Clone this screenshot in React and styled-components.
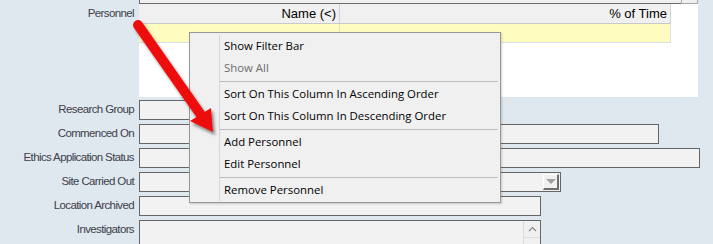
import styled, { createGlobalStyle } from "styled-components"

const GlobalStyle = createGlobalStyle`
    body {
        margin: 0;
        background: #dfe7ef;
        font-family: "Liberation Sans", Arial, sans-serif;
    }
`

const Page = styled.div`
    position: relative;
    width: 713px;
    height: 244px;
    overflow: hidden;
    background: #dfe7ef;
`

const Form = styled.div`
    display: flex;
    flex-direction: column;
`

const Row = styled.div`
    display: flex;
    align-items: flex-start;
`

const Fields = styled.div`
    display: flex;
    flex-direction: column;
    gap: 4px;
    margin-top: 3px;
`

const Label = styled.div`
    width: 134px;
    margin-right: 5px;
    flex-shrink: 0;
    text-align: right;
    font-size: 11.5px;
    letter-spacing: -0.62px;
    line-height: 18px;
    color: #404049;
    padding-top: ${p => p.$top || 0}px;
    white-space: nowrap;
`

const Grid = styled.div`
    width: 559px;
    height: 97px;
    background: #fff;
    display: flex;
    flex-direction: column;
`

const TopStrip = styled.div`
    display: flex;
    height: 4px;
`

const StripLine = styled.div`
    flex: 1;
    box-sizing: border-box;
    border-left: 1px solid #6a6a6a;
    border-bottom: 1px solid #6a6a6a;
    background: #f0f0f0;
`

const StripStub = styled.div`
    width: 17px;
    box-sizing: border-box;
    border: 1px solid #a8a8a8;
    border-top: none;
    background: #f0f0f0;
`

const GridRow = styled.div`
    display: flex;
    width: 532px;
    height: ${p => p.$h}px;
    background: ${p => p.$bg};
    border-bottom: 1px solid ${p => p.$line};
`

const Cell = styled.div`
    width: ${p => p.$w}px;
    box-sizing: border-box;
    border-right: 1px solid ${p => p.$line};
    text-align: right;
    padding-right: 3px;
    font-size: 13px;
    line-height: ${p => p.$h}px;
    color: #000;
    white-space: nowrap;
`

const Field = styled.div`
    width: ${p => p.$w}px;
    height: ${p => p.$h || 20}px;
    box-sizing: border-box;
    border: 1px solid #666;
    background: #f2f2f2;
    display: flex;
    justify-content: flex-end;
    align-items: flex-start;
`

const DropButton = styled.div`
    width: 16px;
    height: 16px;
    box-sizing: border-box;
    margin: 1px 1px 0 0;
    background: #f0f0f0;
    border-top: 1px solid #fff;
    border-left: 1px solid #fff;
    border-right: 2px solid #6d6d6d;
    border-bottom: 2px solid #6d6d6d;
    display: flex;
    align-items: center;
    justify-content: center;

    &::after {
        content: "";
        border-left: 5px solid transparent;
        border-right: 5px solid transparent;
        border-top: 5px solid #a0a0a0;
    }
`

const ScrollBar = styled.div`
    width: 17px;
    align-self: stretch;
    box-sizing: border-box;
    border-left: 1px solid #dcdcdc;
    background: #f0f0f0;
`

const ScrollUp = styled.div`
    height: 17px;
    box-sizing: border-box;
    border-bottom: 1px solid #dcdcdc;
    display: flex;
    align-items: center;
    justify-content: center;
`

const Menu = styled.div`
    position: absolute;
    left: 189px;
    top: 32px;
    width: 312px;
    box-sizing: border-box;
    padding: 2px 0 1px;
    background: #f0f0f0;
    border: 1px solid #979797;
    box-shadow: 1px 1px 2px rgba(0, 0, 0, 0.18);
    font-family: "Open Sans", "Noto Sans", sans-serif;
    font-size: 11.4px;

    &::before {
        content: "";
        position: absolute;
        left: 29px;
        top: 2px;
        bottom: 1px;
        width: 1px;
        background: #d5d5d5;
    }
`

const Item = styled.div`
    height: 22px;
    line-height: 22px;
    padding-left: 34px;
    color: ${p => (p.$disabled ? "#6d6d6d" : "#000")};
    white-space: nowrap;
`

const Separator = styled.div`
    height: 4px;
    margin: 0 2px 0 30px;
    display: flex;
    align-items: center;

    &::after {
        content: "";
        flex: 1;
        height: 1px;
        background: #bdbdbd;
    }
`

const Arrow = styled.svg`
    position: absolute;
    left: 0;
    top: 0;
    pointer-events: none;
`

const menuItems = [
    ["Show Filter Bar"],
    ["Show All", true],
    "sep",
    ["Sort On This Column In Ascending Order"],
    ["Sort On This Column In Descending Order"],
    "sep",
    ["Add Personnel"],
    ["Edit Personnel"],
    "sep",
    ["Remove Personnel"],
]

export default function App() {
    return (
        <>
            <GlobalStyle />
            <Page>
                <Form>
                    <Row>
                        <Label $top={4}>Personnel</Label>
                        <Grid>
                            <TopStrip>
                                <StripLine />
                                <StripStub />
                            </TopStrip>
                            <GridRow $h={19} $bg="#f0f0f0" $line="#c9c9c9">
                                <Cell $w={201} $h={19} $line="#d2d2d2">Name (&lt;)</Cell>
                                <Cell $w={331} $h={19} $line="#d2d2d2">% of Time</Cell>
                            </GridRow>
                            <GridRow $h={18} $bg="#fffcbf" $line="#dbe0e8">
                                <Cell $w={201} $h={18} $line="#e6e3c0" />
                                <Cell $w={331} $h={18} $line="#dbe0e8" />
                            </GridRow>
                        </Grid>
                    </Row>
                    <Fields>
                        <Row>
                            <Label>Research Group</Label>
                            <Field $w={330} />
                        </Row>
                        <Row>
                            <Label>Commenced On</Label>
                            <Field $w={520} />
                        </Row>
                        <Row>
                            <Label>Ethics Application Status</Label>
                            <Field $w={561} />
                        </Row>
                        <Row>
                            <Label>Site Carried Out</Label>
                            <Field $w={422}>
                                <DropButton />
                            </Field>
                        </Row>
                        <Row>
                            <Label>Location Archived</Label>
                            <Field $w={402} />
                        </Row>
                        <Row>
                            <Label>Investigators</Label>
                            <Field $w={402} $h={40}>
                                <ScrollBar>
                                    <ScrollUp>
                                        <svg width="9" height="6" viewBox="0 0 9 6">
                                            <polyline points="1,5 4.5,1.5 8,5" fill="none" stroke="#8a8a8a" strokeWidth="1.2" />
                                        </svg>
                                    </ScrollUp>
                                </ScrollBar>
                            </Field>
                        </Row>
                    </Fields>
                </Form>

                <Menu>
                    {menuItems.map((item, i) =>
                        item === "sep"
                            ? <Separator key={i} />
                            : <Item key={i} $disabled={item[1]}>{item[0]}</Item>
                    )}
                </Menu>

                <Arrow width="713" height="244" viewBox="0 0 713 244">
                    <defs>
                        <filter id="shadow" x="-20%" y="-20%" width="140%" height="140%">
                            <feDropShadow dx="2" dy="3" stdDeviation="1.6" floodColor="#000" floodOpacity="0.45" />
                        </filter>
                    </defs>
                    <g filter="url(#shadow)">
                        <line x1="138" y1="25" x2="201" y2="115" stroke="#ee1111" strokeWidth="10" strokeLinecap="round" />
                        <polygon points="190,121 211,108 213,132" fill="#ee1111" />
                    </g>
                </Arrow>
            </Page>
        </>
    )
}
